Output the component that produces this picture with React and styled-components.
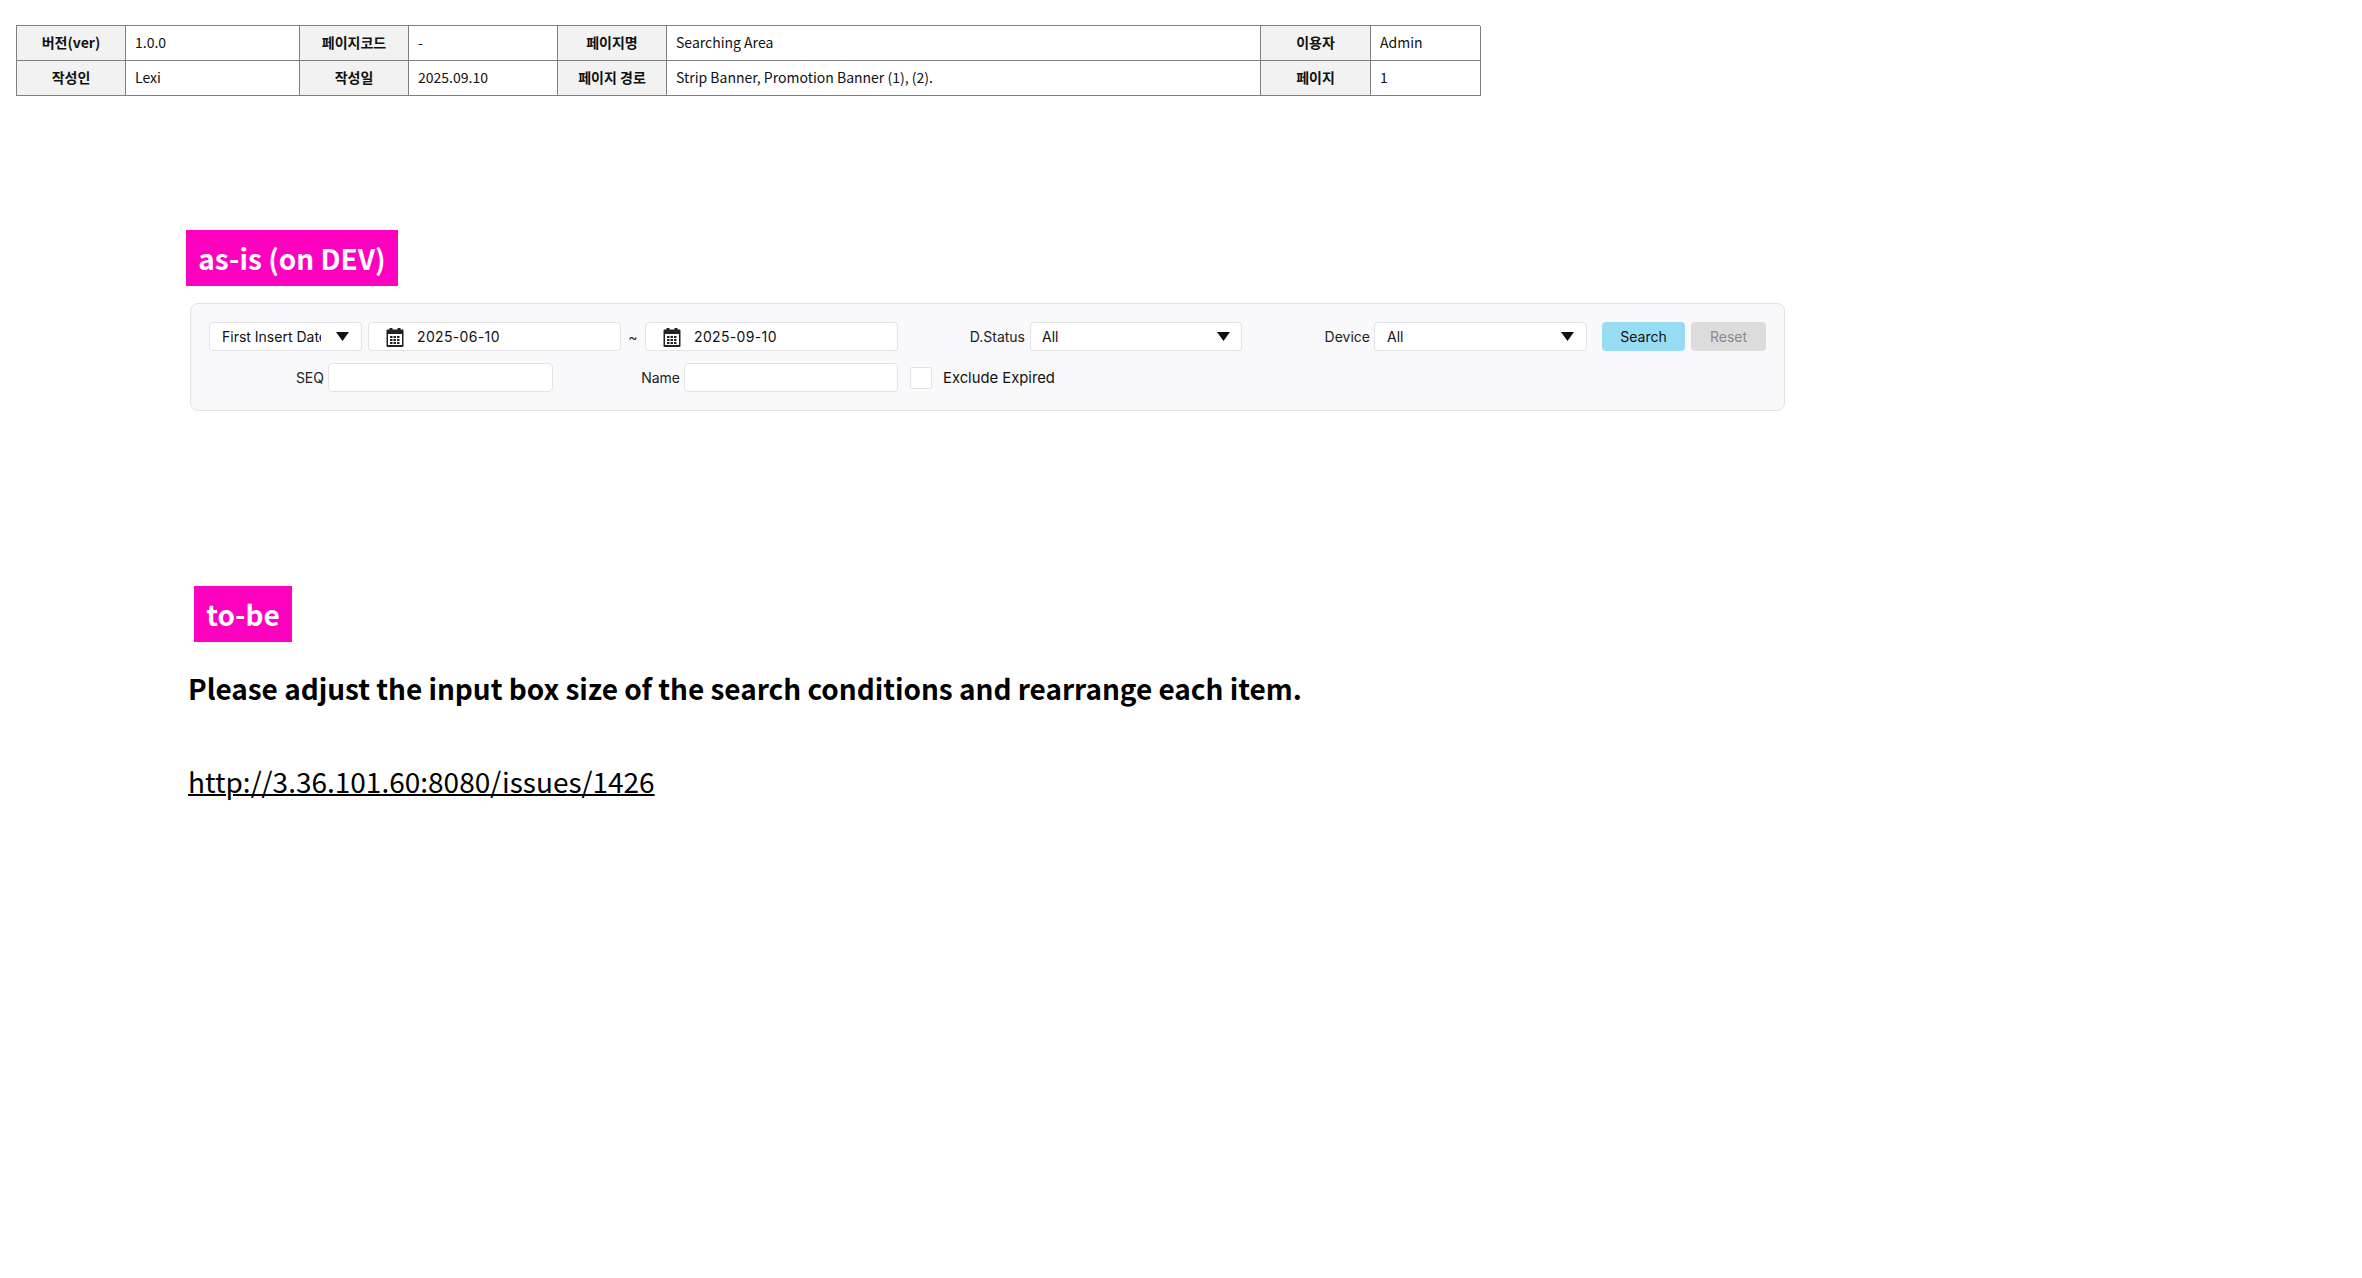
import React from 'react';
import styled, { createGlobalStyle } from 'styled-components';

const Global = createGlobalStyle`
  html, body { margin: 0; padding: 0; background: #fff; }
  body { font-family: "Noto Sans CJK KR", "Noto Sans", sans-serif; color: #000; }
  * { box-sizing: border-box; }
`;

const Page = styled.div`
  width: 2362px;
  height: 1278px;
  padding-top: 25px;
  overflow: hidden;
`;

// --- header table ---
const InfoTable = styled.div`
  display: grid;
  grid-template-columns: 109px 174px 109px 149px 109px 594px 110px 110px;
  grid-auto-rows: 35px;
  width: 1464px;
  margin-left: 16px;
  border-top: 1px solid #7f7f7f;
  border-left: 1px solid #7f7f7f;
`;

const Cell = styled.div`
  display: flex;
  align-items: center;
  justify-content: ${p => (p.$head ? 'center' : 'flex-start')};
  padding-left: ${p => (p.$head ? '0' : '9px')};
  padding-bottom: 2px;
  background: ${p => (p.$head ? '#f2f2f2' : '#fff')};
  border-right: 1px solid #7f7f7f;
  border-bottom: 1px solid #7f7f7f;
  font-size: 14px;
  font-weight: ${p => (p.$head ? 700 : 400)};
  color: #111;
`;

// --- pink section tags ---
const Tag = styled.div`
  display: flex;
  align-items: center;
  justify-content: center;
  width: ${p => p.$w}px;
  height: 56px;
  margin-top: ${p => p.$top}px;
  margin-left: ${p => p.$left}px;
  padding-bottom: 1px;
  background: #ff00bf;
  color: #fff;
  font-size: 28px;
  font-weight: 700;
  white-space: nowrap;
`;

// --- search panel ---
const Panel = styled.div`
  width: 1595px;
  margin: 17px 0 0 190px;
  padding: 18px 17px 18px 18px;
  display: flex;
  flex-direction: column;
  gap: 12px;
  background: #f9f8fb;
  border: 1px solid #e2e2e4;
  border-radius: 8px;
  font-family: Inter, "Liberation Sans", sans-serif;
  font-size: 14px;
  color: #222;
`;

const Row = styled.div`
  display: flex;
  align-items: center;
  height: 29px;
`;

const Box = styled.div`
  display: flex;
  align-items: center;
  flex: none;
  width: ${p => p.$w}px;
  height: 29px;
  margin-left: ${p => p.$ml || 0}px;
  padding-left: ${p => p.$pl || 0}px;
  background: #fff;
  border: 1px solid #e3e3e6;
  border-radius: 4px;
  color: #111;
  font-size: 14px;
`;

const SelectText = styled.span`
  flex: ${p => (p.$clip ? '0 0 99px' : '1')};
  overflow: hidden;
  white-space: nowrap;
`;

const Arrow = styled.svg`
  flex: none;
  width: 13px;
  height: 9px;
  margin-left: ${p => p.$ml || 0}px;
  margin-right: ${p => p.$mr || 0}px;
`;

const Calendar = styled.svg`
  flex: none;
  width: 18px;
  height: 20px;
  margin-left: 17px;
`;

const DateText = styled.span`
  margin-left: 13px;
  letter-spacing: 0.35px;
`;

const Tilde = styled.div`
  flex: none;
  width: 24px;
  text-align: center;
`;

const Label = styled.div`
  flex: none;
  width: ${p => p.$w}px;
  margin-right: ${p => p.$mr}px;
  text-align: right;
  white-space: nowrap;
`;

const Btn = styled.div`
  display: flex;
  align-items: center;
  justify-content: center;
  flex: none;
  width: ${p => p.$w}px;
  height: 29px;
  margin-left: ${p => p.$ml}px;
  border-radius: 4px;
  background: ${p => p.$bg};
  color: ${p => p.$fg};
`;

const Check = styled.div`
  flex: none;
  width: 22px;
  height: 22px;
  margin-left: 12px;
  background: #fff;
  border: 1px solid #e3e3e6;
  border-radius: 2px;
`;

const CheckText = styled.div`
  margin-left: 11px;
  color: #111;
  font-size: 14.8px;
  white-space: nowrap;
`;

// --- notes ---
const Note = styled.div`
  margin: 22px 0 0 188px;
  font-size: 28px;
  font-weight: 700;
  line-height: 48px;
  letter-spacing: -0.035px;
`;

const LinkText = styled.a`
  display: inline-block;
  margin: 45px 0 0 188px;
  font-size: 28px;
  line-height: 48px;
  color: #000;
  text-decoration: underline;
  text-decoration-thickness: 2px;
`;

const DownArrow = props => (
  <Arrow viewBox="0 0 13 9" {...props}>
    <path d="M0 0h13L6.5 9z" fill="#111" />
  </Arrow>
);

const CalendarIcon = () => (
  <Calendar viewBox="0 0 18 20">
    <path fill="#222" d="M1.5 2.500h2V1h3v1.500h5V1h3v1.500h2a1 1 0 0 1 1 1V19a1 1 0 0 1-1 1h-15a1 1 0 0 1-1-1V3.500a1 1 0 0 1 1-1z" />
    <rect x="2" y="7" width="14" height="11" fill="#fff" />
    {[4, 7.5, 11].map(x => [9, 12, 15].map(y => (
      <rect key={`${x}-${y}`} x={x} y={y} width="2.5" height="2" fill="#222" />
    )))}
  </Calendar>
);

const header = [
  [['버전(ver)', 1], ['1.0.0'], ['페이지코드', 1], ['-'], ['페이지명', 1], ['Searching Area'], ['이용자', 1], ['Admin']],
  [['작성인', 1], ['Lexi'], ['작성일', 1], ['2025.09.10'], ['페이지 경로', 1], ['Strip Banner, Promotion Banner (1), (2).'], ['페이지', 1], ['1']],
];

const App = () => (
  <Page>
    <Global />
    <InfoTable>
      {header.flat().map(([text, head], i) => (
        <Cell key={i} $head={!!head}>{text}</Cell>
      ))}
    </InfoTable>

    <Tag $w={212} $top={134} $left={186}>as-is (on DEV)</Tag>

    <Panel>
      <Row>
        <Box $w={153} $pl={12}>
          <SelectText $clip>First Insert Date</SelectText>
          <DownArrow $ml={15} />
        </Box>
        <Box $w={253} $ml={6}><CalendarIcon /><DateText>2025-06-10</DateText></Box>
        <Tilde>~</Tilde>
        <Box $w={253}><CalendarIcon /><DateText>2025-09-10</DateText></Box>
        <Label $w={127} $mr={5}>D.Status</Label>
        <Box $w={212} $pl={11}>
          <SelectText>All</SelectText>
          <DownArrow $mr={11} />
        </Box>
        <Label $w={128} $mr={4}>Device</Label>
        <Box $w={213} $pl={12}>
          <SelectText>All</SelectText>
          <DownArrow $mr={12} />
        </Box>
        <Btn $w={83} $ml={15} $bg="#97dcf3" $fg="#111">Search</Btn>
        <Btn $w={75} $ml={6} $bg="#dcdcdc" $fg="#8a8a8a">Reset</Btn>
      </Row>
      <Row>
        <Label $w={115} $mr={4}>SEQ</Label>
        <Box $w={225} />
        <Label $w={127} $mr={4}>Name</Label>
        <Box $w={214} />
        <Check />
        <CheckText>Exclude Expired</CheckText>
      </Row>
    </Panel>

    <Tag $w={98} $top={175} $left={194}>to-be</Tag>
    <Note>Please adjust the input box size of the search conditions and rearrange each item.</Note>
    <LinkText>http://3.36.101.60:8080/issues/1426</LinkText>
  </Page>
);

export default App;
